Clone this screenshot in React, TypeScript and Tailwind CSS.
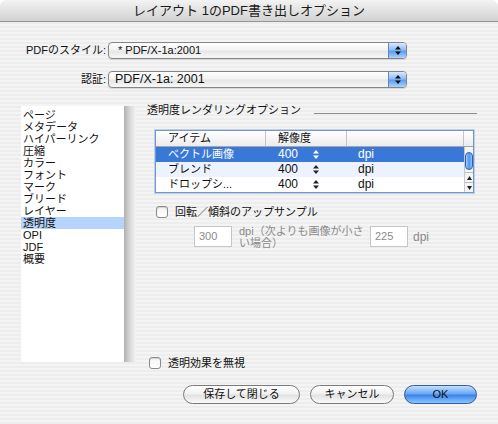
import React from "react";

const LIST = ["ページ", "メタデータ", "ハイパーリンク", "圧縮", "カラー", "フォント", "マーク", "ブリード", "レイヤー", "透明度", "OPI", "JDF", "概要"];

const ROWS = [
  { name: "ベクトル画像", sel: true },
  { name: "ブレンド", alt: true },
  { name: "ドロップシ..." },
];

function UpDown({ color = "#111" }: { color?: string }) {
  return (
    <svg width="6" height="9" viewBox="0 0 6 9">
      <path d="M0,3.6 L3,0 L6,3.6 Z M0,5.4 L3,9 L6,5.4 Z" fill={color} />
    </svg>
  );
}

function Popup({ text, pad }: { text: string; pad: string }) {
  return (
    <div className="flex h-[17px] w-[299px] items-stretch rounded-[4px] border border-[#858585] bg-[linear-gradient(#ffffff,#f3f3f3_45%,#e6e6e6_55%,#f7f7f7)] shadow-[0_1px_1px_rgba(0,0,0,0.12)]">
      <span className={`flex-1 truncate leading-[15px] text-[#111] ${pad}`}>{text}</span>
      <div className="flex w-[18px] items-center justify-center rounded-r-[3px] border-l border-[#5f86c2] bg-[linear-gradient(#d8eaff,#8fbdf7_45%,#5c9df0_55%,#a9d3ff)]">
        <UpDown />
      </div>
    </div>
  );
}

function Check() {
  return <span className="block h-[12px] w-[12px] shrink-0 rounded-[3px] border border-[#8a8a8a] bg-[linear-gradient(#f4f4f4,#ffffff)] shadow-[inset_0_1px_1px_rgba(0,0,0,0.15)]" />;
}

function Btn({ label, w, primary }: { label: string; w: string; primary?: boolean }) {
  return (
    <button
      className={`flex h-[19px] items-center justify-center rounded-full border text-[11px] leading-[17px] ${w} ${
        primary
          ? "border-[#2f5d9e] bg-[linear-gradient(#c7e0ff,#6aa8f2_45%,#3a86ec_55%,#8cc6ff)] text-[#111]"
          : "border-[#7a7a7a] bg-[linear-gradient(#ffffff,#f1f1f1_45%,#e2e2e2_55%,#fafafa)] text-[#111]"
      }`}
    >
      {label}
    </button>
  );
}

export default function App() {
  return (
    <div className="h-[424px] w-[498px] overflow-hidden bg-white [font-family:'Liberation_Sans','Noto_Sans_CJK_JP',sans-serif] text-[11px] text-[#111]">
      {/* title bar */}
      <div className="flex h-[22px] items-center justify-center rounded-t-[6px] border-b border-[#959595] bg-[linear-gradient(#f3f3f3,#d2d2d2)] text-[13px] leading-[21px] text-[#1a1a1a]">
        レイアウト 1のPDF書き出しオプション
      </div>

      {/* body */}
      <div className="h-[402px] bg-[repeating-linear-gradient(to_bottom,#ededed_0px,#ededed_2px,#f4f4f4_2px,#f4f4f4_4px)] pt-[20px]">
        <div className="grid grid-cols-[106px_299px] items-center gap-x-[2px] gap-y-[12px]">
          <span className="text-right leading-[17px]">PDFのスタイル:</span>
          <Popup text="* PDF/X-1a:2001" pad="pl-[9px] text-[11px]" />
          <span className="text-right leading-[17px]">認証:</span>
          <Popup text="PDF/X-1a: 2001" pad="pl-[6px] text-[12.5px]" />
        </div>

        <div className="mt-[15px] flex h-[267px] items-start pl-[21px]">
          {/* category list */}
          <div className="mt-[3px] flex h-[256px]">
            <div className="w-[103px] bg-white pt-[3px]">
              {LIST.map((t) => (
                <div key={t} className={`h-[12px] pl-[2px] leading-[12px] ${t === "透明度" ? "bg-[#b5d3fb]" : ""}`}>
                  {t}
                </div>
              ))}
            </div>
            <div className="w-[12px] bg-[linear-gradient(to_right,#b0b0b0,#d8d8d8_50%,#f3f3f3)]" />
          </div>

          {/* options */}
          <div className="ml-[11px] flex flex-1 flex-col">
            <div className="flex h-[14px] items-center">
              <span className="leading-[14px]">透明度レンダリングオプション</span>
              <div className="ml-[13px] mr-[21px] mt-[7px] h-px flex-1 bg-[#8c8c8c]" />
            </div>

            <div className="ml-[8px] mt-[13px] w-[319px] border border-[#7997c6] shadow-[0_0_0_1px_#b7cff0]">
              <div className="flex h-[16px] border-b border-[#a6a6a6] bg-[linear-gradient(#ffffff,#ececec)] leading-[15px]">
                <div className="w-[110px] border-r border-[#c4c4c4] pl-[12px]">アイテム</div>
                <div className="w-[81px] border-r border-[#c4c4c4] pl-[12px]">解像度</div>
                <div className="w-[117px] border-r border-[#c4c4c4]" />
                <div className="flex-1" />
              </div>
              <div className="flex">
                <div className="flex-1">
                  {ROWS.map((r) => (
                    <div
                      key={r.name}
                      className={`flex h-[15px] items-center leading-[15px] ${
                        r.sel ? "bg-[#3a78d8] text-white" : r.alt ? "bg-[#edf3fe]" : "bg-white"
                      }`}
                    >
                      <span className="w-[110px] pl-[12px]">{r.name}</span>
                      <span className="w-[47px] pl-[12px] text-[12px]">400</span>
                      <span className="flex w-[34px]">
                        <UpDown color={r.sel ? "#fff" : "#222"} />
                      </span>
                      <span className="pl-[11px] text-[12px]">dpi</span>
                    </div>
                  ))}
                </div>
                <div className="flex w-[9px] flex-col border-l border-[#c8c8c8] bg-[#f4f4f4]">
                  <div className="h-[25px]">
                    <div className="mx-auto mt-[5px] h-[18px] w-[8px] rounded-full border border-[#2a5fae] bg-[linear-gradient(to_right,#a9d0ff,#4c93ef_50%,#8ec3ff)]" />
                  </div>
                  <div className="flex h-[10px] items-center justify-center border-t border-[#bdbdbd]">
                    <svg width="5" height="4" viewBox="0 0 5 4">
                      <path d="M0,4 L2.5,0 L5,4 Z" fill="#222" />
                    </svg>
                  </div>
                  <div className="flex h-[10px] items-center justify-center border-t border-[#bdbdbd]">
                    <svg width="5" height="4" viewBox="0 0 5 4">
                      <path d="M0,0 L2.5,4 L5,0 Z" fill="#222" />
                    </svg>
                  </div>
                </div>
              </div>
            </div>

            <div className="ml-[9px] mt-[12px] flex h-[14px] items-center gap-[7px]">
              <Check />
              <span className="leading-[14px]">回転／傾斜のアップサンプル</span>
            </div>

            <div className="ml-[47px] mt-[7px] flex h-[21px] items-center text-[#8a8a8a]">
              <div className="h-[21px] w-[38px] border border-[#c6c6c6] bg-white pl-[4px] leading-[19px]">300</div>
              <div className="ml-[7px] w-[131px] text-[11px] leading-[12px]">
                dpi（次よりも画像が小さ
                <br />
                い場合）
              </div>
              <div className="h-[21px] w-[38px] border border-[#c6c6c6] bg-white pl-[4px] leading-[19px]">225</div>
              <span className="ml-[5px] text-[12px]">dpi</span>
            </div>

            <div className="ml-[2px] mt-[109px] flex h-[14px] items-center gap-[7px]">
              <Check />
              <span className="leading-[14px]">透明効果を無視</span>
            </div>
          </div>
        </div>

        <div className="mt-[15px] flex justify-end gap-[10px] pr-[21px]">
          <Btn label="保存して閉じる" w="w-[117px]" />
          <Btn label="キャンセル" w="w-[84px]" />
          <Btn label="OK" w="w-[73px]" primary />
        </div>
      </div>
    </div>
  );
}
